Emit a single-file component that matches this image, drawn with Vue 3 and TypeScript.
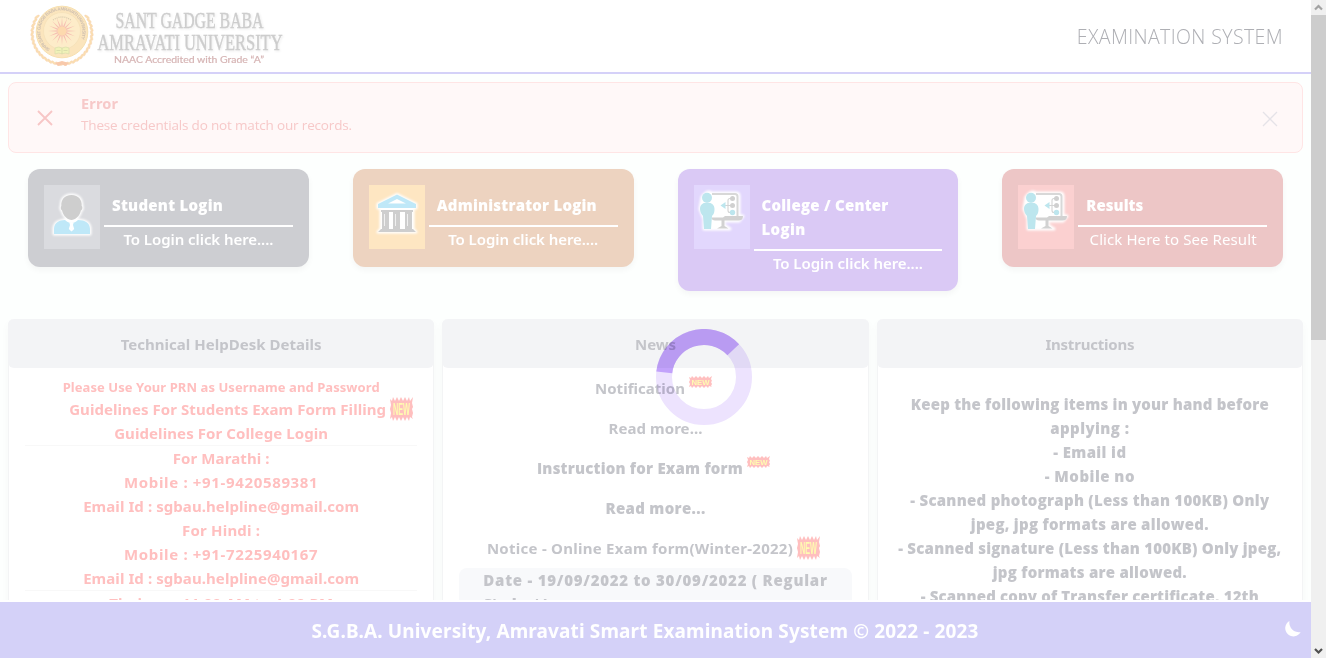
<script setup lang="ts">
interface LoginCard {
  title: { text: string; width: number }[]
  action: string
  actionWidth: number
  tone: string
  icon: 'person' | 'bank' | 'screen'
  soft?: boolean
}
interface Line {
  text: string
  width: number
}

// Tracks an element's letters so that its text fills the given width.
const vFit = {
  mounted(el: HTMLElement, binding: { value: number }) {
    const natural = el.getBoundingClientRect().width
    const count = (el.textContent ?? '').length
    if (count > 1) el.style.letterSpacing = `${(binding.value - natural) / (count - 0.5)}px`
  },
}

const cards: LoginCard[] = [
  { title: [{ text: 'Student Login', width: 111 }], action: 'To Login click here....', actionWidth: 150, tone: 'gray', icon: 'person' },
  { title: [{ text: 'Administrator Login', width: 160 }], action: 'To Login click here....', actionWidth: 150, tone: 'orange', icon: 'bank' },
  { title: [{ text: 'College / Center', width: 127 }, { text: 'Login', width: 44 }], action: 'To Login click here....', actionWidth: 150, tone: 'purple', icon: 'screen' },
  { title: [{ text: 'Results', width: 57 }], action: 'Click Here to See Result', actionWidth: 167, tone: 'red', icon: 'screen', soft: true },
]

const contacts: Line[] = [
  { text: 'For Marathi :', width: 97 },
  { text: 'Mobile : +91-9420589381', width: 194 },
  { text: 'Email Id : sgbau.helpline@gmail.com', width: 276 },
  { text: 'For Hindi :', width: 78 },
  { text: 'Mobile : +91-7225940167', width: 194 },
  { text: 'Email Id : sgbau.helpline@gmail.com', width: 276 },
]

const instructions: Line[] = [
  { text: 'Keep the following items in your hand before', width: 358 },
  { text: 'applying :', width: 79 },
  { text: '- Email id', width: 73 },
  { text: '- Mobile no', width: 90 },
  { text: '- Scanned photograph (Less than 100KB) Only', width: 359 },
  { text: 'jpeg, jpg formats are allowed.', width: 238 },
  { text: '- Scanned signature (Less than 100KB) Only jpeg,', width: 383 },
  { text: 'jpg formats are allowed.', width: 194 },
  { text: '- Scanned copy of Transfer certificate, 12th', width: 338 },
]

const badge = 'M0 1l2 1 1-2 2 2 2-2 2 2 2-2 2 2 2-2 2 2 2-2 1 2 3-2-1 3 1 2-1 1 1 2-1 2 1 1-3-1-1 2-2-2-2 2-2-2-2 2-2-2-2 2-2-2-2 2-1-2-2 1 1-3-1-2 1-2z'

const burst = (rays: number, outer: number, inner: number): string =>
  Array.from({ length: rays * 2 }, (_, i) => {
    const r = i % 2 ? inner : outer
    const a = (i * Math.PI) / rays - Math.PI / 2
    return `${(62 + r * Math.cos(a)).toFixed(2)},${(31 + r * Math.sin(a)).toFixed(2)}`
  }).join(' ')
const sun = burst(16, 14, 4)

const leaves = Array.from({ length: 31 }, (_, i) => {
  const deg = -33 + i * 8.2
  const a = (deg * Math.PI) / 180
  return { x: 62 + 29.8 * Math.cos(a), y: 33.5 + 30.5 * Math.sin(a), turn: deg + (deg < 90 ? 68 : 112) }
})
</script>

<template>
  <div class="screen">
    <div class="page">
      <header class="top">
        <svg class="logo" width="300" height="72" viewBox="0 0 300 72">
          <g fill="#fbdfae" stroke="#f6cfb2" stroke-width=".4">
            <ellipse v-for="(l, i) in leaves" :key="i" :cx="l.x" :cy="l.y" rx="2.8" ry="1.100" :transform="`rotate(${l.turn} ${l.x} ${l.y})`" />
          </g>
          <path d="M55 63l7-2 7 2-3 3-4-1.500-4 1.500z" fill="#f8c9ab" />
          <circle cx="62" cy="32" r="25.800" fill="#fbe5bd" stroke="#f7e0b0" stroke-width="1" />
          <circle cx="62" cy="31" r="18.500" fill="#fdecc9" stroke="#f4dfb8" stroke-width=".7" />
          <path id="ring" d="M50 49A21 21 0 1 1 76 46.500" fill="none" />
          <text class="seal"><textPath href="#ring" textLength="94">SHRI SANT GADGE BABA AMRAVATI UNIVERSITY</textPath></text>
          <path d="M53 20q9-6 18 0" stroke="#d9cbb1" stroke-width="1.300" stroke-dasharray="1 1" fill="none" />
          <polygon :points="sun" fill="#f6bfb2" />
          <circle cx="62" cy="31" r="4.500" fill="#fdd9ae" />
          <path d="M55 48q4-2 7 0 4-2 7 0v6q-4-2-7 0-3-2-7 0z" fill="#f0f2b8" stroke="#dadcae" stroke-width=".7" />
          <path d="M56.500 50.500h4M63.500 50.500h4M62 48v6" stroke="#cbd0a2" stroke-width=".6" />
          <g class="name">
            <text x="115.500" y="28.300" textLength="148" lengthAdjust="spacingAndGlyphs">SANT GADGE BABA</text>
            <text x="97.500" y="50.300" textLength="185" lengthAdjust="spacingAndGlyphs">AMRAVATI UNIVERSITY</text>
          </g>
          <text class="grade" x="114" y="62.700" textLength="150" lengthAdjust="spacingAndGlyphs">NAAC Accredited with Grade “A”</text>
        </svg>
        <span class="system"><span v-fit="206" class="fit">EXAMINATION SYSTEM</span></span>
      </header>

      <section class="alert">
        <svg class="cross" width="16" height="16" viewBox="0 0 16 16"><path d="M1 1l14 14M15 1L1 15" /></svg>
        <div class="message">
          <strong><span v-fit="37" class="fit">Error</span></strong>
          <p><span v-fit="271" class="fit">These credentials do not match our records.</span></p>
        </div>
        <svg class="cross dismiss" width="16" height="16" viewBox="0 0 16 16"><path d="M1 1l14 14M15 1L1 15" /></svg>
      </section>

      <section class="cards">
        <article v-for="card in cards" :key="card.title[0].text" class="card" :class="card.tone">
          <div class="tile">
            <svg v-if="card.icon === 'person'" width="56" height="64" viewBox="0 0 56 64">
              <g class="halo">
                <path d="M27.500 10C20 10 17 15 17.300 21c-1 1-.5 4 .8 4.500C19 31 24 35 27.500 35s8.500-4 9.400-9.500c1.500-.5 2-3.500.8-4.500.5-6-3-11-10.200-11z" />
                <path d="M10 49v-5c0-6 5-9 12-9h12c7 0 12 3 12 9v5z" />
              </g>
              <path d="M27.500 10C20 10 17 15 17.300 21c-1 1-.5 4 .8 4.500C19 31 24 35 27.500 35s8.500-4 9.400-9.500c1.500-.5 2-3.500.8-4.500.5-6-3-11-10.200-11z" fill="#cecece" />
              <path d="M10 49v-5c0-6 5-9 11-9 2 2 4 3 6.500 3s4.500-1 6.500-3c7 0 12 3 12 9v5z" fill="#bfe8f8" />
              <path d="M25.300 37.500h4.400l-.7 2.500 1.200 4-2.700 2.500-2.700-2.500 1.200-4z" fill="#fff" />
            </svg>
            <svg v-else-if="card.icon === 'bank'" width="56" height="64" viewBox="0 0 56 64">
              <path class="halo" d="M28 9.500L9 19v4h38v-4zM12 25h32v19l3 3H9l3-3z" />
              <path fill-rule="evenodd" d="M28 9.500L9 19v4h38v-4zM28 14l9 4.500H19z" fill="#bfe8f8" />
              <path d="M12 25h32v2H12zM13 27h7v17h-7zM24 27h7v17h-7zM36 27h7v17h-7zM12 44h32l3 3H9z" fill="#cecece" />
              <path d="M15.500 29v12M26.500 29v12M38.500 29v12" stroke="#f0f0f0" stroke-width="1" />
            </svg>
            <svg v-else width="56" height="64" viewBox="0 0 56 64">
              <path class="halo" d="M8 12q5-7 10-4h24q3 0 3 3v20h4l-4 5H30v4l6 4H10V34l-4-10z" />
              <path d="M18 9h23q2.500 0 2.500 2.500V31" fill="none" stroke="#d8d8d8" stroke-width="2" />
              <path d="M17 32.500h12l2-1.500h18q0 4.500-4.500 4.500H21q-3 0-4-3zM27.500 35h3v6l4 2.500H23l4.500-2.500z" fill="#d2d2d2" />
              <path d="M38 13.500h-2q-2 0-2 2v10q0 2 2 2h2M31 20.500h6" stroke="#d4d4d4" stroke-width="1.100" fill="none" />
              <circle cx="38.500" cy="13.500" r="2.500" fill="#d0d0d0" />
              <circle cx="38.500" cy="20.500" r="2.500" fill="#d0d0d0" />
              <circle cx="38.500" cy="27.500" r="2.700" fill="#bde6ee" />
              <path d="M26.500 20.500l5-3.500v7z" fill="#bde6ee" />
              <circle cx="13" cy="12.800" r="5" fill="#bde6ee" />
              <path d="M13 17.500c-5 0-7 3-7 6.500 0 3 1.500 5 3 7l1 13h7l1-13c2-2 2.500-4 2.500-7 0-3.500-2-6.500-7.500-6.500z" fill="#bde6ee" />
            </svg>
          </div>
          <div class="label">
            <h2>
              <span v-for="t in card.title" :key="t.text" class="row"><span v-fit="t.width" class="fit">{{ t.text }}</span></span>
            </h2>
            <p :class="{ light: card.soft }"><span v-fit="card.actionWidth" class="fit">{{ card.action }}</span></p>
          </div>
        </article>
      </section>

      <main class="panels">
        <section class="panel">
          <h3><span v-fit="201" class="fit">Technical HelpDesk Details</span></h3>
          <div class="help">
            <p class="prn"><span v-fit="317" class="fit">Please Use Your PRN as Username and Password</span></p>
            <p class="guide">
              <span v-fit="317" class="fit">Guidelines For Students Exam Form Filling</span>
              <svg class="new tall" width="23" height="24" viewBox="0 0 23 12" preserveAspectRatio="none">
                <path :d="badge" />
                <text x="3" y="9" textLength="17" lengthAdjust="spacingAndGlyphs">NEW</text>
              </svg>
            </p>
            <p class="ruled"><span v-fit="214" class="fit">Guidelines For College Login</span></p>
            <div class="contacts">
              <p v-for="(l, i) in contacts" :key="i"><span v-fit="l.width" class="fit">{{ l.text }}</span></p>
            </div>
            <p><span v-fit="224" class="fit">Timings : 11:00 AM to 1:00 PM</span></p>
          </div>
        </section>

        <section class="panel">
          <h3><span v-fit="41" class="fit">News</span></h3>
          <div class="news">
            <p class="tagged">
              <span v-fit="90" class="fit">Notification</span>
              <svg class="new" width="23" height="12" viewBox="0 0 23 12">
                <path :d="badge" />
                <text x="2.500" y="9" textLength="18" lengthAdjust="spacingAndGlyphs">NEW</text>
              </svg>
            </p>
            <p><span v-fit="94" class="fit">Read more...</span></p>
            <p class="heavy tagged">
              <span v-fit="206" class="fit">Instruction for Exam form</span>
              <svg class="new" width="23" height="12" viewBox="0 0 23 12">
                <path :d="badge" />
                <text x="2.500" y="9" textLength="18" lengthAdjust="spacingAndGlyphs">NEW</text>
              </svg>
            </p>
            <p class="heavy"><span v-fit="100" class="fit">Read more...</span></p>
            <p class="tagged">
              <span v-fit="306" class="fit">Notice - Online Exam form(Winter-2022)</span>
              <svg class="new tall" width="23" height="24" viewBox="0 0 23 12" preserveAspectRatio="none">
                <path :d="badge" />
                <text x="3" y="9" textLength="17" lengthAdjust="spacingAndGlyphs">NEW</text>
              </svg>
            </p>
            <div class="dates">
              <div><span v-fit="344" class="fit">Date - 19/09/2022 to 30/09/2022 ( Regular</span></div>
              <div><span v-fit="65" class="fit">Student )</span></div>
            </div>
          </div>
        </section>

        <section class="panel">
          <h3><span v-fit="89" class="fit">Instructions</span></h3>
          <div class="steps">
            <p v-for="l in instructions" :key="l.text"><span v-fit="l.width" class="fit">{{ l.text }}</span></p>
          </div>
        </section>
      </main>

      <footer class="foot">
        <span v-fit="667" class="fit">S.G.B.A. University, Amravati Smart Examination System © 2022 - 2023</span>
        <svg class="moon" width="16" height="16" viewBox="0 0 16 16"><path d="M4.500 0A8.200 8.200 0 1 0 15.700 11 9.500 9.500 0 0 1 4.500 0z" fill="#fff" /></svg>
      </footer>

      <svg class="spinner" width="96" height="96" viewBox="0 0 96 96">
        <circle cx="48" cy="48" r="40" fill="none" stroke="#ede3fe" stroke-width="16" />
        <path d="M8.260 43.400A40 40 0 0 1 77.250 20.720" fill="none" stroke="#c2a2fb" stroke-width="16" />
      </svg>
    </div>

    <aside class="scrollbar">
      <svg width="15" height="15" viewBox="0 0 15 15"><path d="M4 9.500L7.500 6 11 9.500" fill="none" stroke="#a3a3a3" stroke-width="2.200" /></svg>
      <div class="thumb"></div>
      <svg class="down" width="15" height="15" viewBox="0 0 15 15"><path d="M4 6l3.500 3.500L11 6" fill="none" stroke="#505050" stroke-width="2.200" /></svg>
    </aside>
  </div>
</template>

<style>
body { margin: 0; overflow: hidden; }
</style>

<style scoped>
.screen { display: flex; width: 1326px; height: 658px; overflow: hidden; font: 700 15px/24px "Noto Sans", "Open Sans", sans-serif; color: #c4c5ca; }
.screen * { box-sizing: border-box; }
.fit { display: inline-block; white-space: nowrap; }
p, h2, h3 { margin: 0; font-size: inherit; font-weight: inherit; }
.page { position: relative; display: flex; flex-direction: column; width: 1311px; height: 658px; background: #fdfffe; }
.top { display: flex; flex: none; justify-content: space-between; align-items: center; height: 74px; padding-right: 28px; background: #fff; border-bottom: 2px solid #d4d1f8; }
.logo { display: block; }
.seal { font: 700 4.500px "Liberation Sans", sans-serif; fill: #cfc0b0; }
.name { font: 400 22.500px "Liberation Serif", serif; fill: #cdcdcd; stroke: #cdcdcd; stroke-width: .4; filter: drop-shadow(1px 1px 1px #ececec); }
.grade { font: 400 9.500px Lato, sans-serif; fill: #d6b4b4; stroke: #d6b4b4; stroke-width: .2; }
.system { padding-top: 2px; font-family: "Open Sans", sans-serif; font-size: 19.500px; font-weight: 300; color: #aeafb4; }
.alert { display: flex; flex: none; height: 71px; margin: 8px 8px 0; padding: 9px 24px 0 28px; background: #fff8f8; border: 1px solid #ffe5e5; border-radius: 8px; }
.cross { margin-top: 18px; fill: none; stroke: #f7c6c6; stroke-width: 1.800; }
.message { flex: 1; margin-left: 28px; font-size: 13.500px; line-height: 22px; color: #f7c9c9; }
.message strong { display: block; font-size: 14.500px; font-weight: 700; }
.message p { font-family: "Open Sans", sans-serif; font-weight: 400; }
.dismiss { margin-top: 19px; stroke: #e5e3e8; stroke-width: 1.300; }
.cards { display: grid; flex: none; grid-template-columns: repeat(4, 1fr); gap: 44px; align-items: start; height: 166px; padding: 16px 28px 0; }
.card { display: flex; gap: 4px; padding: 16px; border-radius: 12px; color: #fff; box-shadow: 0 3px 6px rgba(0, 0, 0, .04); }
.tile { flex: none; width: 56px; height: 64px; }
.tile svg { display: block; }
.halo { fill: #fff; stroke: #fff; stroke-width: 3; stroke-linejoin: round; filter: blur(1.200px); }
.gray { background: #cdced2; }
.gray .tile { background: #dadbdf; }
.orange { background: #edd3c0; }
.orange .tile { background: #fee6c2; }
.purple { background: #dac9f5; }
.purple .tile { background: #e2d7fd; }
.red { background: #edc6c6; }
.red .tile { background: #fbd0d0; }
.label { flex: 1; }
.label h2 { padding: 8px; font-family: "Open Sans", sans-serif; font-weight: 800; border-bottom: 2px solid #fff; }
.row { display: block; }
.label p { height: 24px; font-weight: 600; text-align: center; }
.label .light { padding-left: 1px; font-weight: 400; }
.panels { display: grid; flex: none; grid-template-columns: repeat(3, 1fr); gap: 8px; height: 281px; padding: 0 8px; overflow: hidden; text-align: center; }
.panel { background: #fff; border: solid #f3f4f5; border-width: 0 1px; border-radius: 6px 6px 0 0; box-shadow: 0 4px 10px rgba(0, 0, 0, .03); }
.panel h3 { height: 49px; margin: 0 -1px; padding-top: 13px; background: #f3f4f6; border-radius: 6px; }
.help { padding: 8px 16px 0; color: #ffbfbf; }
.help p { height: 24px; }
.help .prn { height: 21px; font-size: 13px; line-height: 23px; }
.guide { display: flex; gap: 4px; justify-content: center; padding-left: 40px; }
.help .ruled { height: 25px; border-bottom: 1px solid #f8f8f8; }
.contacts { border-bottom: 1px solid #f8f8f8; }
.new { flex: none; font: 700 8px "Liberation Sans", sans-serif; }
.new path { fill: #ffbfbf; }
.new text { fill: #fffbb0; }
.news { padding: 8px 16px 0; }
.news p { display: flex; gap: 4px; justify-content: center; height: 24px; margin-bottom: 16px; }
.news .tagged { padding-right: 4px; }
.news .heavy { font-family: "Open Sans", sans-serif; font-weight: 800; }
.dates { margin-top: -8px; padding-left: 24px; background: #f8f9fb; border-radius: 8px; font-family: "Open Sans", sans-serif; font-weight: 800; text-align: left; }
.steps { padding-top: 24px; font-family: "Open Sans", sans-serif; font-weight: 800; }
.foot { display: flex; flex: none; align-items: center; justify-content: center; height: 58px; margin-top: auto; padding: 2px 21px 0 0; background: #d4d1f8; border-top: 2px solid #fff; color: #fff; font-size: 19px; font-weight: 700; }
.moon { position: absolute; right: 10px; bottom: 21px; }
.spinner { position: absolute; top: 329px; left: 656px; mix-blend-mode: multiply; }
.scrollbar { display: flex; flex-direction: column; width: 15px; background: #f0f0f0; }
.scrollbar svg { display: block; flex: none; }
.thumb { height: 325px; background: #cdcdcd; }
.down { margin-top: auto; }
</style>
